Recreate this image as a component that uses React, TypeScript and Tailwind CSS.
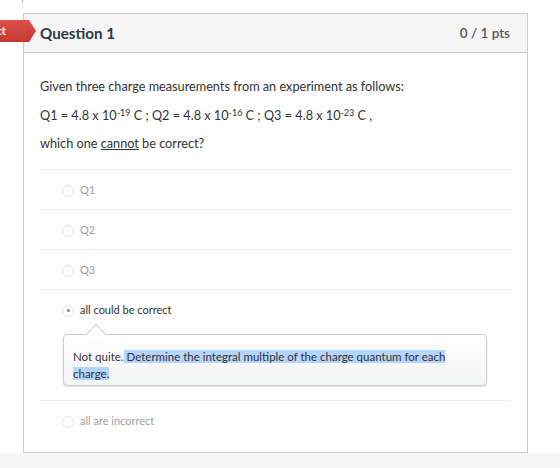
import React from "react";

function Radio({ checked = false }: { checked?: boolean }) {
  return (
    <span className="flex h-[12px] w-[12px] items-center justify-center rounded-full border border-[#e3e3e3] bg-white">
      {checked && <span className="h-[3px] w-[3px] rounded-full bg-[#888]" />}
    </span>
  );
}

function Row({ label, faded = true, checked = false, children }: { label: string; faded?: boolean; checked?: boolean; children?: React.ReactNode }) {
  return (
    <div className="border-t border-[#eeeeee]">
      <div className="flex h-[39px] items-center gap-[6px] pl-[22px] pt-[2px]">
        <Radio checked={checked} />
        <span className={faded ? "text-[11px] text-[#a0a0a0]" : "text-[11px] text-[#333]"}>{label}</span>
      </div>
      {children}
    </div>
  );
}

export default function App() {
  return (
    <div
      className="relative flex h-[468px] w-[560px] flex-col overflow-hidden bg-white"
      style={{ fontFamily: "Lato, 'Open Sans', sans-serif" }}
    >
      <div className="absolute left-[22px] top-0 h-[3px] w-px bg-[#bbb]" />
      {/* red incorrect tag */}
      <div
        className="absolute left-0 top-[20px] h-[22px] w-[36px] overflow-hidden bg-gradient-to-b from-[#df5148] to-[#c4382f]"
        style={{ clipPath: "polygon(0 0, 29px 0, 36px 11px, 29px 22px, 0 22px)" }}
      >
        <span className="absolute right-[30px] top-[3px] whitespace-nowrap text-[12px] font-bold leading-[16px] text-white">
          Incorrect
        </span>
      </div>

      <div className="ml-[23px] mt-[13px] flex h-[440px] w-[505px] flex-col border border-[#c7cdd1]">
        <div className="flex h-[39px] shrink-0 items-center justify-between border-b border-[#c7cdd1] bg-[#f5f5f5] pl-[16px] pr-[17px]">
          <span className="text-[15.2px] font-bold text-[#2d3b45]">Question 1</span>
          <span className="text-[13.5px] font-semibold text-[#555]">0 / 1 pts</span>
        </div>

        <div className="flex flex-col px-[16px] pt-[23px] text-[12.7px] text-[#333]">
          <div className="h-[29px] leading-[20px]">Given three charge measurements from an experiment as follows:</div>
          <div className="h-[28px] leading-[20px]">
            Q1 = 4.8 x 10<sup className="text-[9px]">-19</sup> C ; Q2 = 4.8 x 10<sup className="text-[9px]">-16</sup> C ; Q3 = 4.8 x 10
            <sup className="text-[9px]">-23</sup> C ,
          </div>
          <div className="h-[18px] leading-[20px]">
            which one <span className="underline">cannot</span> be correct?
          </div>

          <div className="mt-[18px] flex flex-col">
            <Row label="Q1" />
            <Row label="Q2" />
            <Row label="Q3" />
            <Row label="all could be correct" faded={false} checked>
              <div className="relative ml-[23px] mr-[24px] mt-[5px] mb-[14px] rounded-[4px] border border-[#c7cdd1] bg-gradient-to-b from-white to-[#f3f4f5] px-[9px] pb-[3px] pt-[13px] shadow-[0_1px_2px_rgba(0,0,0,0.12)]">
                <div className="absolute left-[25px] h-[14px] w-[14px] rotate-45 border-l border-t border-[#c7cdd1] bg-white" style={{ top: "-8px" }} />
                <div className="relative text-[11.5px] leading-[17px] text-[#333]">
                  Not quite.<span className="bg-[#b4d5fd]"> Determine the integral multiple of the charge quantum for each </span>
                  <br />
                  <span className="bg-[#b4d5fd]">charge.</span>
                </div>
              </div>
            </Row>
            <Row label="all are incorrect" />
          </div>
        </div>
      </div>
      <div className="mt-auto h-[15px] w-full bg-[#f7f7f7]" />
    </div>
  );
}
